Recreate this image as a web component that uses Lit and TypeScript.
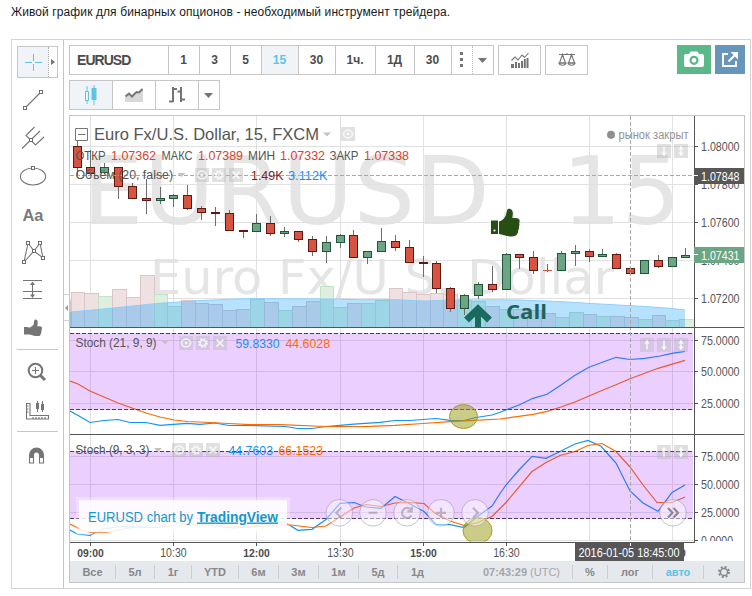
import { LitElement, html, svg, css } from "lit";
import { customElement } from "lit/decorators.js";

type Pt = [number, number];
// centre x, body top, body bottom, wick top, wick bottom, rising
type Candle = [number, number, number, number, number, boolean];

const U = true;
const D = false;

const CANDLES: Candle[] = [
  [77.5, 146, 168, 141, 175, D], [90.5, 167, 174, 150, 175, D], [104.5, 167, 173, 163, 174, U],
  [118.5, 167, 187, 167, 199, D], [132.5, 186, 199, 183, 199, D], [146.5, 198, 201, 179, 214, D],
  [160.5, 198, 201, 187, 204, U], [173.5, 195, 199, 194, 207, U], [187.5, 195, 209, 185, 210, D],
  [201.5, 208, 213, 206, 220, D], [215.5, 212, 214, 207, 226, D], [229.5, 213, 231, 210, 231, D],
  [243.5, 230, 232, 230, 238, D], [256.5, 223, 232, 214, 232, U], [270.5, 223, 234, 216, 236, D],
  [284.5, 231, 234, 227, 237, U], [298.5, 231, 240, 231, 242, D], [312.5, 239, 252, 236, 256, D],
  [326.5, 242, 252, 236, 263, U], [340.5, 235, 243, 234, 248, U], [353.5, 235, 258, 230, 258, D],
  [367.5, 251, 258, 251, 264, U], [381.5, 241, 252, 228, 252, U], [395.5, 241, 248, 235, 251, D],
  [409.5, 247, 263, 240, 263, D], [423.5, 262, 264, 256, 277, D], [436.5, 263, 289, 261, 293, D],
  [450.5, 288, 309, 287, 312, D], [464.5, 295, 309, 294, 315, U], [478.5, 284, 296, 282, 299, U],
  [492.5, 284, 290, 266, 292, D], [506.5, 254, 290, 253, 290, U], [519.5, 254, 258, 254, 269, D],
  [533.5, 257, 271, 251, 274, D], [547.5, 270, 271, 264, 272, D], [561.5, 253, 271, 251, 271, U],
  [575.5, 251, 254, 245, 266, U], [589.5, 251, 257, 249, 262, D], [602.5, 254, 257, 249, 257, U],
  [616.5, 254, 269, 253, 269, D], [630.5, 268, 274, 268, 274, D], [644.5, 260, 274, 260, 274, U],
  [658.5, 260, 267, 255, 268, D], [672.5, 257, 267, 257, 267, U], [685.5, 255, 258, 248, 258, U],
];

// left edge, top, rising
const VOLUMES: [number, number, boolean][] = [
  [70, 300, D], [71, 292, D], [84, 293, D], [98, 296, U], [112, 289, D], [126, 297, D], [140, 275, D],
  [154, 294, U], [167, 306, U], [181, 300, D], [195, 303, D], [208, 304, D], [222, 310, D],
  [236, 309, D], [250, 299, U], [264, 302, D], [278, 310, U], [292, 306, D], [306, 301, D],
  [320, 286, U], [333, 307, U], [347, 303, D], [361, 303, U], [375, 300, U], [389, 288, D],
  [402, 292, D], [416, 294, D], [430, 293, D], [443, 294, D], [457, 300, U], [471, 301, U],
  [485, 306, D], [499, 309, U], [513, 309, D], [527, 310, D], [541, 313, D], [555, 317, U],
  [569, 312, U], [583, 314, D], [596, 316, U], [610, 316, D], [624, 317, D], [638, 319, U],
  [652, 315, D], [665, 320, U], [679, 319, U], [693, 319, U],
];

const VOLUME_AVG: Pt[] = [
  [70, 312], [90, 310.3], [118, 307.5], [160, 303.2], [200, 300.6], [237, 299], [250, 298.6],
  [335, 299], [360, 299.8], [395, 299.6], [425, 301], [450, 300], [500, 299.8], [520, 300],
  [560, 301.6], [600, 304], [640, 306.2], [670, 308.3], [685, 310],
];

const SLOW_K: Pt[] = [
  [70, 411], [79, 416], [90, 422.5], [104, 420.5], [118, 419.5], [130, 422.5], [146, 422.5],
  [160, 425.3], [187, 423.3], [200, 424.3], [215, 423], [229, 425.5], [250, 425.5], [285, 426.5],
  [298, 428.5], [312, 428.5], [326, 426.5], [340, 425.3], [354, 424.2], [380, 422.3], [395, 420.5],
  [410, 420.5], [436, 418.5], [450, 420.3], [464, 420.5], [476, 417.5], [492, 415], [500, 412.3],
  [519, 405], [533, 398.3], [547, 394.3], [561, 385], [575, 375.3], [589, 367.3], [603, 362],
  [616, 357.3], [630, 359.5], [645, 358.3], [660, 356], [672, 353.3], [685, 351.3],
];

const SLOW_D: Pt[] = [
  [70, 381], [78, 384], [90, 391], [104, 397], [118, 403], [132, 408], [146, 413], [160, 417],
  [174, 420], [187, 421.5], [210, 422.5], [229, 423.5], [250, 424.7], [280, 424.7], [326, 426.5],
  [370, 426.3], [395, 425.3], [423, 423.5], [450, 421.7], [470, 420.7], [500, 419], [533, 414.3],
  [547, 411.3], [561, 407], [575, 402], [589, 396], [603, 390], [616, 384.7], [630, 378.7],
  [658, 368.3], [685, 360.3],
];

const FAST_K: Pt[] = [
  [70, 530], [77, 534], [90, 535.3], [103, 529], [118, 526.7], [132, 526.7], [158, 527.7],
  [170, 521.5], [187, 524], [201, 525], [215, 526], [232, 528], [250, 527], [270, 523],
  [285, 522.5], [298, 530.3], [312, 529.3], [326, 519.5], [340, 503.3], [354, 502.5], [366, 507],
  [381, 508.3], [395, 496.5], [409, 503.5], [424, 511.5], [436, 524.5], [450, 524.7], [464, 527.5],
  [478, 516], [492, 506], [500, 493.5], [506, 485], [519, 470], [532, 456.3], [546, 458.3],
  [560, 451.5], [575, 444], [588, 440.5], [601, 446.3], [616, 463], [630, 491], [643, 503],
  [658, 511.3], [672, 492.5], [685, 485],
];

const FAST_D: Pt[] = [
  [70, 524], [82, 530], [90, 532.5], [107, 532.5], [118, 530], [132, 527.5], [160, 527],
  [187, 524.5], [215, 525.5], [250, 527], [287, 524.5], [312, 527.5], [326, 526], [340, 517],
  [354, 508], [366, 504.5], [381, 506.5], [395, 503], [408, 502.3], [424, 503.5], [436, 514],
  [450, 521], [464, 525.5], [478, 522.5], [492, 516.5], [500, 508.5], [506, 502.5], [532, 471.5],
  [546, 462.5], [560, 455.5], [575, 451.5], [588, 445.5], [602, 443.5], [616, 451.5], [630, 467],
  [643, 485], [657, 502.5], [672, 502.5], [685, 497],
];

const GRID_X = [90.5, 173.5, 256.5, 340.5, 423.5, 506.5, 589.5, 672.5];
const GRID_Y = [146.5, 184.5, 222.5, 260.5, 298.5, 340.5, 371.5, 403.5, 456.5, 484.5, 512.5, 540.5];

const AXIS: [number, string][] = [
  [146.5, "1.08000"], [184.5, "1.07800"], [222.5, "1.07600"], [260.5, "1.07400"], [298.5, "1.07200"],
  [340.5, "75.0000"], [371.5, "50.0000"], [403.5, "25.0000"],
  [456.5, "75.0000"], [484.5, "50.0000"], [512.5, "25.0000"], [540.5, "0.0000"],
];

const TIMES: [number, string, boolean][] = [
  [90.5, "09:00", true], [173.5, "10:30", false], [256.5, "12:00", true], [340.5, "13:30", false],
  [423.5, "15:00", true], [506.5, "16:30", false], [672.5, "18:00", true],
];

const line = (p: Pt[]) => p.map((q) => q.join(",")).join(" ");

const label = (x: number, y: number, w: number, t: string, cls = "") =>
  svg`<text class="t ${cls}" x=${x} y=${y} textLength=${w} lengthAdjust="spacingAndGlyphs">${t}</text>`;

const caret = (x: number, y: number) =>
  svg`<path class="caret" d="M${x - 4} ${y - 2}h8l-4 4z"/>`;

const eyeButton = (x: number, y: number) => svg`
  <rect class="chip" x=${x} y=${y} width="14" height="14"/>
  <ellipse class="glyph" cx=${x + 7} cy=${y + 7} rx="4.5" ry="3.8"/>
  <circle class="dot" cx=${x + 7} cy=${y + 7} r="1.4"/>`;

const gearButton = (x: number, y: number) => svg`
  <rect class="chip" x=${x} y=${y} width="14" height="14"/>
  <circle class="glyph cog" cx=${x + 7} cy=${y + 7} r="4.2"/>
  <circle class="glyph" cx=${x + 7} cy=${y + 7} r="2.9"/>`;

const closeButton = (x: number, y: number) => svg`
  <rect class="chip" x=${x} y=${y} width="14" height="14"/>
  <path class="glyph" d="M${x + 3.5} ${y + 3.5}l7 7m0-7l-7 7"/>`;

const arrowButton = (x: number, y: number, up: boolean, down: boolean) => svg`
  <rect class="chip" x=${x} y=${y} width="14" height="14"/>
  <path class="glyph" d="M${x + 7} ${y + 2.5}v9"/>
  ${up ? svg`<path class="dot" d="M${x + 4} ${y + 5.5}l3-3.5 3 3.5z"/>` : ""}
  ${down ? svg`<path class="dot" d="M${x + 4} ${y + 8.5}l3 3.5 3-3.5z"/>` : ""}`;

const navButton = (x: number, d: string) => svg`
  <circle class="nav" cx=${x} cy="512.8" r="13.3"/>
  <path class="navmark" transform="translate(${x} 512.8)" d=${d}/>`;

@customElement("price-chart")
export class PriceChart extends LitElement {
  static styles = css`
    :host { display: block; height: 445px; }
    svg { display: block; }
    .t { font-family: "Liberation Sans", Arial, sans-serif; font-size: 12px; fill: #555; }
    .t.title { font-size: 16.5px; }
    .t.bold { font-weight: bold; fill: #4a4a4a; font-size: 11.5px; }
    .t.red { fill: #d5442f; }
    .t.maroon { fill: #7d1b1b; }
    .t.blue { fill: #1490f5; }
    .t.orange { fill: #ff6a00; }
    .t.muted { fill: #949494; }
    .t.white { fill: #fff; }
    .water { font-family: "DejaVu Sans", Verdana, sans-serif; fill: #e5e5e5; }
    .big { font-size: 95px; }
    .mid { font-size: 48px; }
    .grid { stroke: #e1e1e1; }
    .up { fill: #6ba583; stroke: #225437; }
    .down { fill: #d75442; stroke: #5b1a13; }
    .flat { stroke: #d75442; }
    .wick { stroke: #6d6d6d; }
    .vup { fill: #deefdf; stroke: #c5e2c7; }
    .vdown { fill: #efe1e1; stroke: #dcc5c7; }
    .bup { fill: #9dd5e7; stroke: #8bcadb; }
    .bdown { fill: #a9cbe9; stroke: #97b9dc; }
    .area { fill: #b3e0ff; fill-opacity: 0.95; }
    .arealine { fill: none; stroke: #8fcffb; }
    .band { fill: #9915ff; fill-opacity: 0.2; }
    .limit { stroke: #4d3d55; stroke-dasharray: 4 2; }
    .k { fill: none; stroke: #1492f5; stroke-width: 1.2; }
    .d { fill: none; stroke: #ff6a00; stroke-width: 1.2; }
    .rule { stroke: #555; }
    .fold { fill: none; stroke: #777; }
    .cross { stroke: #a9a9a9; stroke-dasharray: 4 2; }
    .chip { fill: #b4b4b4; fill-opacity: 0.42; }
    .glyph { fill: none; stroke: #fff; stroke-opacity: 0.7; stroke-width: 1.8; }
    .cog { stroke-dasharray: 1.7 1.6; }
    .dot { fill: #fff; fill-opacity: 0.8; }
    .caret { fill: #c2c2c2; }
    .nav { fill: #fff; fill-opacity: 0.45; stroke: #a39aab; stroke-opacity: 0.6; }
    .navmark { fill: none; stroke: #8f8698; stroke-opacity: 0.55; stroke-width: 2.2; }
    .navmark.strong { stroke-opacity: 1; }
    .mark { fill: #989910; fill-opacity: 0.5; stroke: #9a9a18; stroke-opacity: 0.9; }
    .thumb { fill: #274e13; }
    .arrow { fill: none; stroke: #1a6b5e; stroke-width: 7; }
    .stem { stroke-width: 6; }
    .call { font: bold 20px "Open Sans", "Noto Sans", sans-serif; fill: #1b6459; }
    .tagdark { fill: #575757; }
    .taggreen { fill: #6ba583; }
    .halo { fill: #fff; fill-opacity: 0.3; }
    .plate { fill: #fff; fill-opacity: 0.82; }
    .brand { font-family: "Liberation Sans", Arial, sans-serif; font-size: 14px; fill: #1398cc; }
    .brand.strong { font-weight: bold; text-decoration: underline; }
    .tick { stroke: #555; }
    .paper { fill: #fff; }
  `;

  private bars(up: string, down: string) {
    return VOLUMES.slice(0, -1).map(([x, y, rising], i) => {
      const w = VOLUMES[i + 1][0] - x;
      return svg`<rect class=${rising ? up : down} x=${x + 0.5} y=${y + 0.5} width=${w} height=${327 - y}/>`;
    });
  }

  private candle([x, t, b, wt, wb, up]: Candle) {
    const body = b - t < 2
      ? svg`<path class="flat" d="M${x - 4.5} ${t + 0.5}h9"/>`
      : svg`<rect class=${up ? "up" : "down"} x=${x - 4} y=${t + 0.5} width="8" height=${b - t - 1}/>`;
    return svg`<path class="wick" d="M${x} ${wt}V${wb}"/>${body}`;
  }

  render() {
    const area = `70,327 ${line(VOLUME_AVG)} 685,327`;
    return html`<svg width="674" height="445" viewBox="70 116 674 445">
      <defs>
        <clipPath id="plot"><rect x="70" y="116" width="623.5" height="425.5"/></clipPath>
        <clipPath id="price"><rect x="70" y="116" width="623.5" height="211"/></clipPath>
        <clipPath id="avg"><polygon points=${area}/></clipPath>
        <clipPath id="scale"><rect x="694" y="116" width="50" height="425"/></clipPath>
      </defs>
      <g clip-path="url(#plot)">
        <text class="water big" x="82" y="224" textLength="408" lengthAdjust="spacingAndGlyphs">EURUSD</text>
        <text class="water big" x="493" y="224">,</text>
        <text class="water big" x="562" y="224" textLength="119" lengthAdjust="spacingAndGlyphs">15</text>
        <text class="water mid" x="150" y="294" textLength="464" lengthAdjust="spacingAndGlyphs">Euro Fx/U.S. Dollar</text>
        ${GRID_X.map((x) => svg`<path class="grid" d="M${x} 116V541"/>`)}
        ${GRID_Y.map((y) => svg`<path class="grid" d="M70 ${y}H693"/>`)}
      </g>
      <g clip-path="url(#price)">
        ${this.bars("vup", "vdown")}
        <polygon class="area" points=${area} />
        <g clip-path="url(#avg)">${this.bars("bup", "bdown")}</g>
        <polyline class="arealine" points=${line(VOLUME_AVG)} />
        ${CANDLES.map((c) => this.candle(c))}
      </g>
      <g clip-path="url(#plot)">
        <polyline class="k" points=${line(SLOW_K)} />
        <polyline class="d" points=${line(SLOW_D)} />
        <polyline class="k" points=${line(FAST_K)} />
        <polyline class="d" points=${line(FAST_D)} />
        <rect class="band" x="70" y="333" width="623" height="77" />
        <rect class="band" x="70" y="451" width="623" height="68" />
        ${[333.5, 409.5, 451.5, 518.5].map((y) => svg`<path class="limit" d="M70 ${y}H693"/>`)}
        <ellipse class="mark" cx="463.5" cy="416.5" rx="14" ry="12" />
        <ellipse class="mark" cx="477.5" cy="530.5" rx="14.5" ry="13" />
      </g>

      <path class="cross" d="M70 175.5H694" />
      <path class="cross" d="M630.5 116V542" />

      <g clip-path="url(#price)">
        <path class="arrow" d="M466.500 320L478 309L489.500 320" />
        <path class="arrow stem" d="M478 308V328" />
        <text class="call" x="506" y="319" textLength="41" lengthAdjust="spacingAndGlyphs">Call</text>
        <path class="thumb" d="M491 220.500h7v13.500h-7zM499 221.500c3-1 5-2.500 6.500-5.500 1-2 1-4 1.700-6 .7-1.800 3.700-1.500 5 .5 1.300 2.500.3 5 .1 7.500 2.200 0 4.700.1 6.200.7 1.600 1 1.200 3 .7 4.300.4 1.200.3 2.500-.2 3.500.2 1.400 0 2.700-.8 3.600 0 1.500-.2 2.900-1 4-1 2.200-3.500 2.300-6 2.300-5 0-8-1.800-12.200-2.400z" />
        <circle class="paper" cx="494.500" cy="230.500" r="1.100" />
      </g>

      <path class="fold" d="M75.500 128.500h12v12h-12zM78 134.500h7.500" />
      ${label(94, 140, 225, "Euro Fx/U.S. Dollar, 15, FXCM", "title")}
      ${caret(327, 134.5)} ${eyeButton(341, 127)}
      ${label(75.5, 160, 30, "ОТКР")} ${label(111, 160, 45, "1.07362", "red")}
      ${label(161.5, 160, 31, "МАКС")} ${label(198, 160, 45, "1.07389", "red")}
      ${label(248, 160, 27, "МИН")} ${label(280, 160, 45, "1.07332", "red")}
      ${label(329.5, 160, 29, "ЗАКР")} ${label(364, 160, 45, "1.07338", "red")}
      ${label(75.5, 179, 97.5, "Объём (20, false)")} ${caret(181.5, 175)}
      ${eyeButton(195, 168)} ${gearButton(212, 168)} ${closeButton(229, 168)}
      ${label(251, 179.5, 32.5, "1.49K", "maroon")} ${label(288, 179.5, 39.5, "3.112K", "blue")}
      <circle cx="611" cy="134.800" r="4" fill="#8f8f8f" />
      ${label(618.5, 138.5, 70, "рынок закрыт", "muted")}
      ${arrowButton(657, 144, false, true)} ${arrowButton(674, 144, true, true)}

      ${label(75.5, 347, 81, "Stoch (21, 9, 9)")} ${caret(165, 342.5)}
      ${eyeButton(179, 336)} ${gearButton(196, 336)} ${closeButton(213, 336)}
      ${label(235.5, 348, 44, "59.8330", "blue")} ${label(285.5, 348, 44.5, "44.6028", "orange")}
      ${arrowButton(640, 338, true, false)} ${arrowButton(657, 338, false, true)} ${arrowButton(674, 338, true, true)}

      ${label(75.5, 454, 74, "Stoch (9, 3, 3)")} ${caret(158, 450)}
      ${eyeButton(172, 443)} ${gearButton(189, 443)} ${closeButton(206, 443)}
      ${label(228.5, 455, 44.5, "44.7603", "blue")} ${label(278.5, 455, 44.5, "66.1523", "orange")}
      ${arrowButton(657, 445, true, false)} ${arrowButton(674, 445, true, true)}

      <rect class="halo" x="76" y="497" width="214" height="38" />
      <rect class="plate" x="79" y="500" width="208" height="32" />
      <text class="brand" x="88" y="521.500" textLength="105" lengthAdjust="spacingAndGlyphs">EURUSD chart by</text>
      <text class="brand strong" x="197" y="521.500" textLength="81" lengthAdjust="spacingAndGlyphs">TradingView</text>

      ${navButton(339.3, "M2-5l-5 5 5 5")}
      ${navButton(373, "M-4.500 0h9")}
      ${navButton(407, "M4.500 2.500a5 5 0 1 1-.5-5.500M4.800-6v4.500h-4.500")}
      ${navButton(441, "M-5 0h10M0-5v10")}
      ${navButton(475, "M-2-5l5 5-5 5")}
      <circle class="nav" cx="673" cy="512.800" r="13.300" />
      <path class="navmark strong" d="M668 508l4.500 4.800-4.500 4.800M673.500 508l4.500 4.800-4.500 4.800" />

      <path class="rule" d="M70 327.500H744M70 434.500H744M70 542.500H695M694.500 116V543" />
      <g clip-path="url(#scale)">
        ${AXIS.map(([y, t]) => svg`<path class="tick" d="M695 ${y}h3"/>${label(701, y + 4.5, t.length === 6 ? 32 : 38.5, t)}`)}
      </g>
      <rect class="tagdark" x="694" y="168" width="50" height="16" />
      <path d="M694 175.500h4" stroke="#fff" />
      ${label(701, 180.5, 38.5, "1.07848", "white")}
      <rect class="taggreen" x="694" y="247" width="50" height="16" />
      <path d="M694 254.500h4" stroke="#fff" />
      ${label(701, 259.5, 38.5, "1.07431", "white")}

      ${TIMES.map(([x, t, b]) => svg`<path class="tick" d="M${x} 543v3"/>${label(x - 13.3, 557, 26.5, t, b ? "bold" : "")}`)}
      <rect class="tagdark" x="575" y="543" width="109" height="18" />
      <path d="M630.500 543v3" stroke="#fff" />
      ${label(578.5, 557, 101, "2016-01-05 18:45:00", "white")}
    </svg>`;
  }
}

const INTERVALS: [string, string][] = [
  ["1", "w31"], ["3", "w31"], ["5", "w31"], ["15", "w37 on"], ["30", "w37"],
  ["1ч.", "w40"], ["1Д", "w39"], ["30", "w37"],
];

const RANGES: [string, number][] = [
  ["Все", 46], ["5л", 39], ["1г", 37], ["YTD", 47], ["6м", 40], ["3м", 40], ["1м", 40], ["5д", 39],
];

const knot = (x: number, y: number) => svg`<rect class="knot" x=${x - 1.5} y=${y - 1.5} width="3" height="3"/>`;

@customElement("app-root")
export class AppRoot extends LitElement {
  static styles = css`
    :host {
      display: block; width: 752px; height: 596px; overflow: hidden; background: #fff;
      font-family: "Liberation Sans", Arial, sans-serif; color: #4c4c4c;
    }
    * { box-sizing: border-box; }
    svg { display: block; flex: none; }
    .lead {
      margin: 0; height: 39px; padding: 4px 0 0 11px; font-size: 12px; line-height: 16px;
      color: #1a1a1a; white-space: nowrap; letter-spacing: 0.1px;
    }
    .frame { margin-left: 11px; width: 740px; height: 550px; border: 1px solid #d3d3d3; display: flex; }
    .side {
      position: relative; width: 52px; border-right: 1px solid #c6c6c6; padding: 6px 0 0 5px;
      display: flex; flex-direction: column; flex: none;
    }
    .first { width: 41px; height: 32px; border: 1px solid #c6c6c6; display: flex; margin-bottom: 3px; }
    .first .main { width: 31px; background: #f0f4f8; border-right: 1px dotted #aaa; }
    .first .more { width: 8px; display: flex; align-items: center; justify-content: center; }
    .sep { width: 41px; height: 1px; background: #c6c6c6; margin: 2px 0; }
    .sep.low { margin: 3px 0; }
    .fold {
      position: absolute; left: 52px; top: 254px; width: 5px; height: 27px;
      border: solid #d3d3d3; border-width: 1px 0; display: flex; align-items: center;
    }
    .ln { fill: none; stroke: #757575; stroke-width: 1.1; }
    .thick { fill: none; stroke: #757575; stroke-width: 2; }
    .heavy { stroke-width: 3; }
    .solid { fill: #757575; }
    .knot { fill: #fff; stroke: #6f6f6f; }
    .sky { fill: none; stroke: #5bc4e8; }
    .aa { font: bold 17px "Liberation Sans", Arial, sans-serif; fill: #7b7b7b; }
    .body { flex: 1; padding: 5px; display: flex; flex-direction: column; gap: 5px; }
    .row { display: flex; height: 30px; }
    .group { display: flex; border: 1px solid #c6c6c6; height: 30px; }
    .cell {
      display: flex; align-items: center; justify-content: center; border-right: 1px solid #c6c6c6;
      font-size: 12px; font-weight: bold; flex: none; padding-right: 1px;
    }
    .cell:last-child { border-right: 0; }
    .symbol { width: 99px; justify-content: flex-start; padding-left: 7px; font-size: 14px; letter-spacing: -0.95px; }
    .w31 { width: 31px; } .w37 { width: 37px; } .w39 { width: 39px; } .w40 { width: 40px; }
    .w43 { width: 43px; } .w20 { width: 20px; }
    .on { background: #f0f4f8; color: #5bc4e8; }
    .dots { width: 21px; border-right: 1px dotted #bbb; }
    .tool { width: 43px; height: 30px; border: 1px solid #c6c6c6; margin-left: 4px; display: flex; align-items: center; justify-content: center; }
    .spacer { flex: 1; }
    .shot { width: 34px; height: 29px; background: #5bb888; display: flex; align-items: center; justify-content: center; }
    .pop { width: 30px; height: 29px; background: #6796bd; margin-left: 4px; display: flex; align-items: center; justify-content: center; }
    .chart { width: 676px; height: 468px; border: 1px solid #c6c6c6; }
    .foot {
      height: 21px; background: #e5e8ed; display: flex; align-items: center;
      font-size: 11px; font-weight: bold; color: #888; white-space: nowrap;
    }
    .foot div { height: 14px; line-height: 14px; text-align: center; border-right: 1px solid #cbced3; flex: none; }
    .foot .bare { border: 0; }
    .foot .clock { width: 136px; text-align: right; padding-right: 12px; color: #a5a5a5; }
    .clock span { font-weight: normal; }
    .foot .pct { width: 35px; } .foot .log { width: 45px; } .foot .auto { width: 51px; color: #5bc4e8; }
  `;

  private sidebar() {
    const icon = (y: number, body: unknown) =>
      html`<svg width="42" height="38" viewBox="17 ${y} 42 38">${body}</svg>`;
    return html`<div class="side">
      <div class="first">
        <div class="main"><svg width="30" height="30" viewBox="18 47 30 30">
          <path class="sky" d="M25 62.500h7M35 62.500h7M33.500 54v7M33.500 64v7" /></svg></div>
        <div class="more"><svg width="4" height="6"><path class="solid" d="M0 0l4 3-4 3z" /></svg></div>
      </div>
      ${icon(81, svg`<path class="ln" d="M25 108L41 92"/>${knot(25, 108)}${knot(41, 92)}`)}
      ${icon(119, svg`<path class="ln" d="M22 148.500L40 131M34.500 127L26 135.500L35.500 145L44 137"/>${knot(31, 140)}`)}
      ${icon(157, svg`<ellipse class="ln" cx="33" cy="176.500" rx="12.600" ry="8.500"/>${knot(33, 168)}`)}
      ${icon(195, svg`<text class="aa" x="22.500" y="221" textLength="21" lengthAdjust="spacingAndGlyphs">Aa</text>`)}
      ${icon(233, svg`<path class="ln" d="M24 262L28 243L34 251L40 243L43 258L34 251Z"/>${knot(24, 262)}${knot(28, 243)}${knot(34, 251)}${knot(40, 243)}${knot(43, 258)}`)}
      ${icon(271, svg`<path class="ln" d="M23 280.500h19M23 291.500h19M23 298.500h19M32.500 283v13"/><path class="solid" d="M30 285l2.500-3.500 2.500 3.500zM30 294.500l2.500 3.500 2.500-3.500z"/>`)}
      ${icon(309, svg`<path class="solid" d="M24 327h3.500l1.500 .7c2.500-.7 4-1.700 4.700-3.700.3-1.700.3-3 1-4.300 1-.5 2.700 0 3 2 .2 1.800-.2 3.300-.5 4.600 1.500 0 3.300 0 4.200.5 1 .8.6 2 .2 2.800.2 1 .1 1.700-.3 2.300.1 1-.2 1.800-.7 2.300-.1 1.500-1.100 1.900-2.600 1.900-4.500 0-5.500-1-8.500-1.600H24z"/>`)}
      <div class="sep"></div>
      ${icon(352, svg`<circle class="thick" cx="35.500" cy="370.500" r="6.800"/><path class="ln" d="M32 370.500h7M35.500 367v7"/><path class="thick heavy" d="M40.500 375.500l4.500 4.500"/>`)}
      ${icon(390, svg`<path class="ln" d="M26.500 403.500h3.500v12h18.500v3.500h-22zM26.500 406h2M26.500 409h2M26.500 412h2M33 417v2M36 417v2M39 417v2M42 417v2M45 417v2M37.500 401v11M42.500 401v11"/><path class="solid" d="M36 403h3v6h-3zM41 404h3v6h-3z"/>`)}
      <div class="sep low"></div>
      ${icon(434, svg`<path d="M31.500 457v-3a5 5 0 0 1 10 0v3" fill="none" stroke="#757575" stroke-width="5"/><path class="ln" d="M29.500 457v5h4v-5M39.500 457v5h4v-5"/>`)}
      <div class="fold"><svg width="4" height="6"><path d="M4 0L1 3l3 3z" fill="#999" /></svg></div>
    </div>`;
  }

  private toolbar() {
    return html`<div class="row">
      <div class="group">
        <div class="cell symbol">EURUSD</div>
        ${INTERVALS.map(([t, c]) => html`<div class="cell ${c}">${t}</div>`)}
        <div class="cell dots"><svg width="3" height="16"><path class="solid" d="M0 0h3v3H0zM0 6h3v3H0zM0 12h3v3H0z" /></svg></div>
        <div class="cell w20"><svg width="9" height="5"><path class="solid" d="M0 0h9L4.500 5z" /></svg></div>
      </div>
      <div class="tool"><svg width="18" height="16">
        <path class="solid" d="M0 12h3v4H0zM4 10h2v6H4zM7 11h2v5H7zM10 9h2v7h-2zM12.800 7h2v9h-2zM15.500 6h2v10h-2z" />
        <path class="ln" d="M.5 8.500L4 5l3 3 4-5 2.500 2.500L17.500 1" /></svg></div>
      <div class="tool"><svg width="18" height="16">
        <path class="ln" d="M1 2.500h16M9 1v2M4.500 2.500L1.500 11h6zM13.500 2.500L10.500 11h6z" />
        <path class="ln" d="M1 11c.5 3 6.500 3 7 0zM10 11c.5 3 6.500 3 7 0z" /></svg></div>
      <div class="spacer"></div>
      <div class="shot"><svg width="20" height="17">
        <path fill="#fff" d="M0 5q0-2 2-2h3l1.500-2.500h7L15 3h3q2 0 2 2v9q0 2-2 2H2q-2 0-2-2z" />
        <circle cx="10" cy="9.300" r="3.500" fill="none" stroke="#5bb888" stroke-width="2.200" /></svg></div>
      <div class="pop"><svg width="18" height="16">
        <path fill="none" stroke="#fff" stroke-width="2" d="M7 2H2v12h13V9M7.500 9.500l7-7" />
        <path fill="#fff" d="M9.500 0H17v7.500z" /></svg></div>
    </div>`;
  }

  private styleBar() {
    return html`<div class="row"><div class="group">
      <div class="cell w43 on"><svg width="14" height="20">
        <path class="sky" d="M1.500 6.500h3v9h-3zM3 1v5M3 16v3M10 0v20" /><path fill="#5bc4e8" d="M7.500 3h5v12h-5z" /></svg></div>
      <div class="cell w43"><svg width="18" height="14">
        <path fill="#d8d8d8" d="M0 10l4-4 3 3 5-4 3-1 3-3v13H0z" />
        <path class="thick" d="M.5 8.500L4 5.500l3 3L11.500 4l2.500.5L17.500 1" /></svg></div>
      <div class="cell w43"><svg width="18" height="18">
        <path class="thick" d="M5 1v15M5 3h4M1 15.500h4M13 1v15M9.500 5.500h3.500M13 13.500h4" /></svg></div>
      <div class="cell w20"><svg width="9" height="5"><path class="solid" d="M0 0h9L4.500 5z" /></svg></div>
    </div></div>`;
  }

  private footer() {
    return html`<div class="foot">
      ${RANGES.map(([t, w]) => html`<div style="width:${w}px">${t}</div>`)}
      <div class="bare w39">1д</div>
      <div class="clock">07:43:29 <span>(UTC)</span></div>
      <div class="pct">%</div><div class="log">лог</div><div class="auto">авто</div>
      <svg width="40" height="14" viewBox="0 0 40 14">
        <circle cx="20" cy="7" r="5" fill="none" stroke="#888" stroke-width="2" stroke-dasharray="2 1.930" />
        <circle cx="20" cy="7" r="3.600" fill="#e5e8ed" stroke="#888" stroke-width="1.500" /></svg>
    </div>`;
  }

  render() {
    return html`
      <p class="lead">Живой график для бинарных опционов - необходимый инструмент трейдера.</p>
      <div class="frame">
        ${this.sidebar()}
        <div class="body">
          ${this.toolbar()} ${this.styleBar()}
          <div class="chart"><price-chart></price-chart>${this.footer()}</div>
        </div>
      </div>`;
  }
}
